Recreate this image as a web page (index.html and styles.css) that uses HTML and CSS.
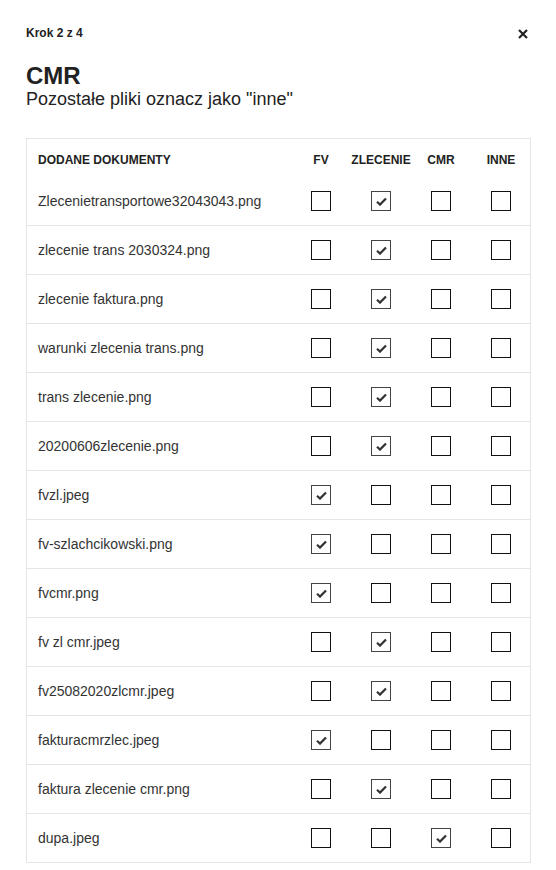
FILE: index.html
```html
<!DOCTYPE html>
<html lang="pl">
<head>
<meta charset="utf-8">
<title>CMR</title>
<link rel="stylesheet" href="styles.css">
</head>
<body>
<div class="modal">
  <div class="topbar">
    <span class="step">Krok 2 z 4</span>
    <span class="close" aria-label="Zamknij">
      <svg width="10" height="10" viewBox="0 0 10 10"><path d="M1 1 L9 9 M9 1 L1 9" stroke="#222" stroke-width="2.2" stroke-linecap="butt"/></svg>
    </span>
  </div>
  <h1 class="title">CMR</h1>
  <p class="subtitle">Pozostałe pliki oznacz jako "inne"</p>

  <div class="table">
    <div class="row head">
      <div class="name">DODANE DOKUMENTY</div>
      <div class="col">FV</div>
      <div class="col">ZLECENIE</div>
      <div class="col">CMR</div>
      <div class="col">INNE</div>
    </div>
    <div id="rows"></div>
  </div>
</div>
<script src="app.js"></script>
</body>
</html>
```

FILE: app.js
```js
const data = [
  ["Zlecenietransportowe32043043.png", 1],
  ["zlecenie trans 2030324.png", 1],
  ["zlecenie faktura.png", 1],
  ["warunki zlecenia trans.png", 1],
  ["trans zlecenie.png", 1],
  ["20200606zlecenie.png", 1],
  ["fvzl.jpeg", 0],
  ["fv-szlachcikowski.png", 0],
  ["fvcmr.png", 0],
  ["fv zl cmr.jpeg", 1],
  ["fv25082020zlcmr.jpeg", 1],
  ["fakturacmrzlec.jpeg", 0],
  ["faktura zlecenie cmr.png", 1],
  ["dupa.jpeg", 2]
];
const check = '<svg width="11" height="9" viewBox="0 0 11 9"><path d="M1 4.8 L4 7.6 L10 1.4" fill="none" stroke="#333" stroke-width="2.2"/></svg>';
const rows = document.getElementById("rows");
let html = "";
for (const [name, sel] of data) {
  html += '<div class="row"><div class="name">' + name + '</div>';
  for (let i = 0; i < 4; i++) {
    html += '<div class="col"><span class="box' + (i === sel ? ' checked' : '') + '">' + (i === sel ? check : '') + '</span></div>';
  }
  html += '</div>';
}
rows.innerHTML = html;
```

FILE: styles.css
```css
* { box-sizing: border-box; }
html, body { margin: 0; padding: 0; background: #fff; }
body {
  font-family: "Liberation Sans", Arial, sans-serif;
  color: #333;
}
.modal {
  padding: 26px 25px 0 26px;
}
.topbar {
  display: flex;
  justify-content: space-between;
  align-items: center;
  height: 14px;
}
.step {
  font-size: 12px;
  font-weight: bold;
  color: #222;
}
.close {
  display: flex;
  margin-right: 3px;
  margin-top: 2px;
}
.title {
  margin: 22px 0 0 0;
  font-size: 24px;
  line-height: 27px;
  font-weight: bold;
  color: #222;
}
.subtitle {
  margin: 0;
  font-size: 18px;
  line-height: 20px;
  color: #222;
}
.table {
  margin-top: 29px;
  width: 505px;
  border: 1px solid #e5e5e5;
}
.row {
  display: grid;
  grid-template-columns: 1fr repeat(4, 60px);
  align-items: center;
  height: 49px;
  border-bottom: 1px solid #e5e5e5;
}
#rows .row:last-child { border-bottom: none; height: 48px; }
.row.head {
  height: 38px;
  border-bottom: none;
  padding-top: 4px;
  font-size: 12px;
  font-weight: bold;
  color: #222;
}
.name {
  padding-left: 11px;
  font-size: 14px;
}
.head .name { font-size: 12px; }
.col {
  display: flex;
  justify-content: center;
  padding-left: 2px;
}
.box {
  width: 20px;
  height: 20px;
  border: 1px solid #111;
  display: flex;
  align-items: center;
  justify-content: center;
}
.box.checked { border-color: #444; }
.box svg { display: block; }
```
